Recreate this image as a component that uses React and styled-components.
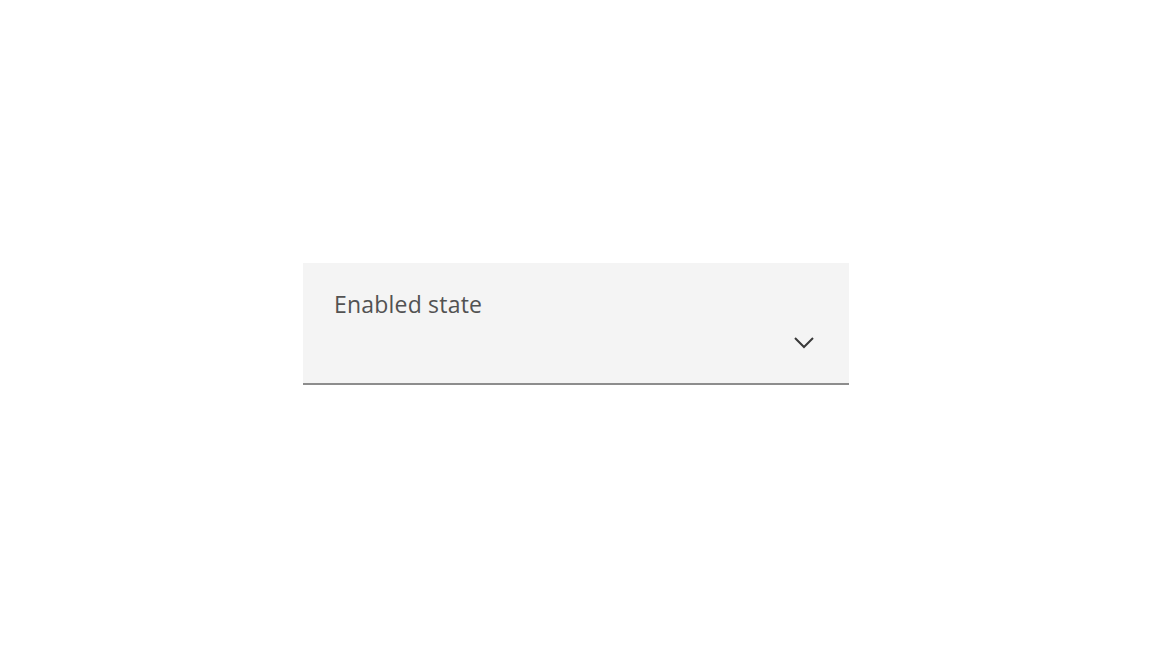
import React from "react";
import styled, { createGlobalStyle } from "styled-components";

const Global = createGlobalStyle`
  html, body {
    margin: 0;
    padding: 0;
    background: #ffffff;
    font-family: "Open Sans", "Liberation Sans", sans-serif;
  }
`;

const Page = styled.div`
  width: 1152px;
  height: 646px;
  display: flex;
  justify-content: center;
  padding-top: 263px;
  box-sizing: border-box;
`;

const Field = styled.div`
  width: 546px;
  height: 122px;
  box-sizing: border-box;
  background: #f4f4f4;
  border-bottom: 2px solid #8d8d8d;
  display: flex;
  flex-direction: column;
  padding: 26px 34px 0 31px;
`;

const Label = styled.span`
  font-size: 23px;
  font-weight: 400;
  color: #525252;
  letter-spacing: 0.2px;
  line-height: 30px;
`;

const Row = styled.div`
  display: flex;
  justify-content: flex-end;
  margin-top: 17px;
`;

const Chevron = () => (
  <svg width="22" height="14" viewBox="0 0 22 14">
    <path d="M2 2 L11 11 L20 2" fill="none" stroke="#393939" strokeWidth="2" />
  </svg>
);

export default function App() {
  return (
    <>
      <Global />
      <Page>
        <Field>
          <Label>Enabled state</Label>
          <Row>
            <Chevron />
          </Row>
        </Field>
      </Page>
    </>
  );
}
